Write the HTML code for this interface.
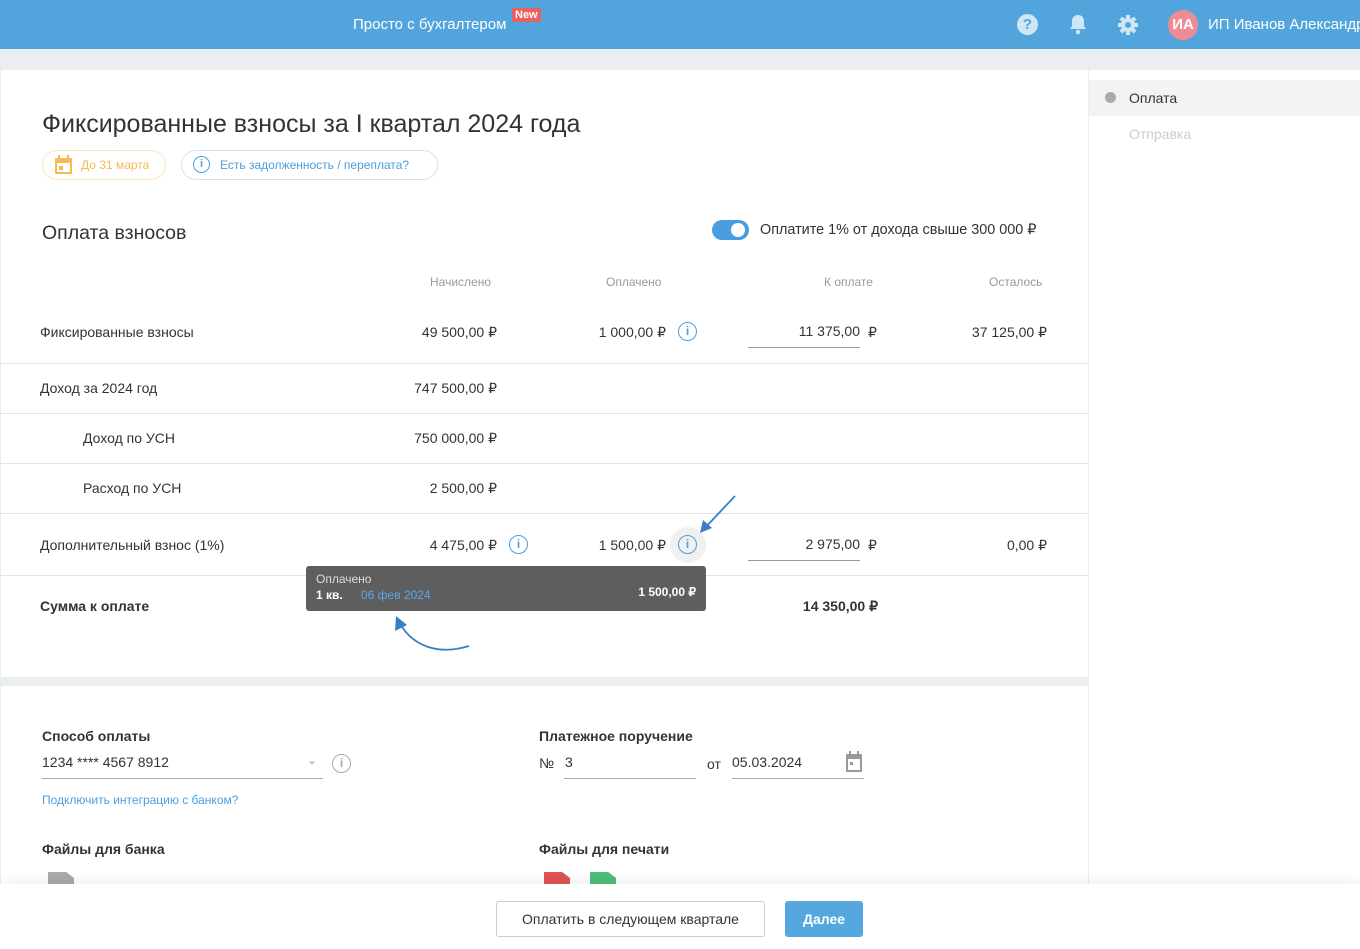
<!DOCTYPE html>
<html><head><meta charset="utf-8"><style>
*{box-sizing:border-box;margin:0;padding:0}
body{width:1360px;height:949px;overflow:hidden;background:#ebeef1;font-family:"Liberation Sans",sans-serif;color:#333;position:relative}
.a{position:absolute;white-space:nowrap}
.hdr{position:absolute;left:0;top:0;width:1360px;height:49px;background:#52a5dc}
.main{position:absolute;left:1px;top:70px;width:1087px;height:607px;background:#fff}
.main2{position:absolute;left:1px;top:686px;width:1087px;height:263px;background:#fff}
.side{position:absolute;left:1089px;top:70px;width:271px;height:879px;background:#fff}
.hl{position:absolute;left:1px;width:1087px;height:1px;background:#e4e4e4}
.t14{font-size:14px}
.r{text-align:right}
.ul{position:absolute;height:1px;background:#999}
.info{position:absolute;width:19px;height:19px;border:1.6px solid #4a9ee0;border-radius:50%;color:#4a9ee0;font-size:12px;font-weight:bold;text-align:center;line-height:16px;font-family:"Liberation Sans",sans-serif}
</style></head><body>
<div class="hdr"></div>
<div class="a" style="left:353px;top:16px;color:#fff;font-size:15px">Просто с бухгалтером</div>
<div class="a" style="left:512px;top:8px;background:#e8605f;color:#fff;font-size:11px;font-weight:bold;padding:1px 3px;border-radius:2px">New</div>
<div class="a" style="left:1017px;top:14px;width:21px;height:21px;border-radius:50%;background:#cfe6f7;color:#52a5dc;font-weight:bold;font-size:15px;text-align:center;line-height:21px">?</div>
<svg class="a" style="left:1068px;top:13px" width="20" height="22" viewBox="0 0 20 22"><path d="M10 2c-4 0-6 3-6 6v5l-2 3h16l-2-3V8c0-3-2-6-6-6z" fill="#cfe6f7"/><circle cx="10" cy="19" r="2.3" fill="#cfe6f7"/></svg>
<svg class="a" style="left:1117px;top:14px" width="22" height="22" viewBox="0 0 22 22"><g fill="#cfe6f7"><circle cx="11" cy="11" r="7"/><rect x="9" y="1" width="4" height="20"/><rect x="1" y="9" width="20" height="4"/><rect x="9" y="1" width="4" height="20" transform="rotate(45 11 11)"/><rect x="9" y="1" width="4" height="20" transform="rotate(-45 11 11)"/></g><circle cx="11" cy="11" r="3" fill="#52a5dc"/></svg>
<div class="a" style="left:1168px;top:10px;width:30px;height:30px;border-radius:50%;background:#ef8c93;color:#fff;font-weight:bold;font-size:15px;text-align:center;line-height:30px">ИА</div>
<div class="a" style="left:1208px;top:16px;color:#fff;font-size:15px">ИП Иванов Александр</div>

<div class="main"></div><div class="main2"></div>
<div class="side"></div>
<div class="a" style="left:1089px;top:80px;width:271px;height:36px;background:#f3f3f3"></div>
<div class="a" style="left:1105px;top:92px;width:11px;height:11px;border-radius:50%;background:#aaa"></div>
<div class="a t14" style="left:1129px;top:90px;color:#333">Оплата</div>
<div class="a t14" style="left:1129px;top:126px;color:#ccc">Отправка</div>

<div class="a" style="left:42px;top:110px;font-size:25px;color:#333">Фиксированные взносы за I квартал 2024 года</div>
<div class="a" style="left:42px;top:150px;width:124px;height:30px;border:1px solid #fde3c4;border-radius:15px"></div>
<svg class="a" style="left:54px;top:155px" width="19" height="20" viewBox="0 0 19 20"><rect x="1" y="3" width="17" height="16" rx="1" fill="#f5b955"/><rect x="4" y="0" width="2" height="5" fill="#f5b955"/><rect x="13" y="0" width="2" height="5" fill="#f5b955"/><rect x="3" y="8" width="13" height="9" fill="#fff"/><rect x="5" y="11" width="4" height="4" fill="#f5b955"/></svg>
<div class="a" style="left:81px;top:158px;font-size:12px;color:#f5b955">До 31 марта</div>
<div class="a" style="left:181px;top:150px;width:257px;height:30px;border:1px solid #cfe4f5;border-radius:15px"></div>
<div class="info" style="left:193px;top:156px;width:17px;height:17px;font-size:11px;line-height:14px">i</div>
<div class="a" style="left:220px;top:158px;font-size:12px;color:#4a9ee0">Есть задолженность / переплата?</div>

<div class="a" style="left:42px;top:222px;font-size:19.5px;color:#333">Оплата взносов</div>
<div class="a" style="left:712px;top:220px;width:37px;height:20px;border-radius:10px;background:#4a9ee0"></div>
<div class="a" style="left:731px;top:223px;width:14px;height:14px;border-radius:50%;background:#fff"></div>
<div class="a" style="left:760px;top:222px;font-size:14.4px">Оплатите 1% от дохода свыше 300 000 ₽</div>

<div class="a" style="left:430px;top:275px;font-size:12px;color:#999">Начислено</div>
<div class="a" style="left:606px;top:275px;font-size:12px;color:#999">Оплачено</div>
<div class="a" style="left:824px;top:275px;font-size:12px;color:#999">К оплате</div>
<div class="a" style="left:989px;top:275px;font-size:12px;color:#999">Осталось</div>

<div class="a t14" style="left:40px;top:324px">Фиксированные взносы</div>
<div class="a t14 r" style="right:863px;top:324px">49 500,00 ₽</div>
<div class="a t14 r" style="right:694px;top:324px">1 000,00 ₽</div>
<div class="info" style="left:678px;top:322px">i</div>
<div class="a t14 r" style="right:500px;top:323px">11 375,00</div>
<div class="a t14" style="left:868px;top:324px">₽</div>
<div class="ul" style="left:748px;top:347px;width:112px"></div>
<div class="a t14 r" style="right:313px;top:324px">37 125,00 ₽</div>
<div class="hl" style="top:363px"></div>

<div class="a t14" style="left:40px;top:380px">Доход за 2024 год</div>
<div class="a t14 r" style="right:863px;top:380px">747 500,00 ₽</div>
<div class="hl" style="top:413px"></div>
<div class="a t14" style="left:83px;top:430px">Доход по УСН</div>
<div class="a t14 r" style="right:863px;top:430px">750 000,00 ₽</div>
<div class="hl" style="top:463px"></div>
<div class="a t14" style="left:83px;top:480px">Расход по УСН</div>
<div class="a t14 r" style="right:863px;top:480px">2 500,00 ₽</div>
<div class="hl" style="top:513px"></div>

<div class="a t14" style="left:40px;top:537px">Дополнительный взнос (1%)</div>
<div class="a t14 r" style="right:863px;top:537px">4 475,00 ₽</div>
<div class="info" style="left:509px;top:535px">i</div>
<div class="a t14 r" style="right:694px;top:537px">1 500,00 ₽</div>
<div class="a" style="left:670px;top:527px;width:36px;height:36px;border-radius:50%;background:#f0f0f0"></div>
<div class="info" style="left:678px;top:535px">i</div>
<div class="a t14 r" style="right:500px;top:536px">2 975,00</div>
<div class="a t14" style="left:868px;top:537px">₽</div>
<div class="ul" style="left:748px;top:560px;width:112px"></div>
<div class="a t14 r" style="right:313px;top:537px">0,00 ₽</div>
<div class="hl" style="top:575px"></div>

<div class="a t14" style="left:40px;top:598px;font-weight:bold">Сумма к оплате</div>
<div class="a t14 r" style="right:482px;top:598px;font-weight:bold">14 350,00 ₽</div>

<div class="a" style="left:306px;top:566px;width:400px;height:45px;background:#5e5e5e;border-radius:3px"></div>
<div class="a" style="left:316px;top:572px;font-size:12px;color:#ddd">Оплачено</div>
<div class="a" style="left:316px;top:588px;font-size:12px;color:#fff;font-weight:bold">1 кв.</div>
<div class="a" style="left:361px;top:588px;font-size:12px;color:#5aa8ea">06 фев 2024</div>
<div class="a r" style="right:664px;top:585px;font-size:12px;color:#fff;font-weight:bold">1 500,00 ₽</div>

<svg class="a" style="left:0;top:0" width="1360" height="949" viewBox="0 0 1360 949"><g stroke="#3a7ec6" stroke-width="1.8" fill="none"><path d="M735 496 L703 530"/><path d="M469 646 C440 655 412 648 398 620"/></g><path d="M700 533 L703 520 L712 528Z" fill="#3a7ec6"/><path d="M396 616 L395 631 L407 625Z" fill="#3a7ec6"/></svg>

<div class="a t14" style="left:42px;top:728px;font-weight:bold">Способ оплаты</div>
<div class="a t14" style="left:42px;top:754px">1234 **** 4567 8912</div>
<div class="a" style="left:307px;top:753px;font-size:12px;color:#999">⌄</div>
<div class="ul" style="left:42px;top:778px;width:281px;background:#aaa"></div>
<div class="a" style="left:332px;top:754px;width:19px;height:19px;border:1.5px solid #aaa;border-radius:50%;color:#aaa;font-size:12px;font-weight:bold;text-align:center;line-height:16px">i</div>
<div class="a" style="left:42px;top:793px;font-size:12px;color:#4a9ee0">Подключить интеграцию с банком?</div>
<div class="a t14" style="left:539px;top:728px;font-weight:bold">Платежное поручение</div>
<div class="a t14" style="left:539px;top:755px">№</div>
<div class="a t14" style="left:565px;top:754px">3</div>
<div class="ul" style="left:564px;top:778px;width:132px;background:#aaa"></div>
<div class="a t14" style="left:707px;top:756px">от</div>
<div class="a t14" style="left:732px;top:754px">05.03.2024</div>
<div class="ul" style="left:732px;top:778px;width:132px;background:#aaa"></div>
<svg class="a" style="left:845px;top:751px" width="18" height="22" viewBox="0 0 18 22"><rect x="1" y="3" width="16" height="18" rx="1" fill="#999"/><rect x="4" y="0" width="2" height="5" fill="#999"/><rect x="12" y="0" width="2" height="5" fill="#999"/><rect x="3" y="8" width="12" height="11" fill="#fff"/><rect x="5" y="11" width="3" height="3" fill="#999"/></svg>

<div class="a t14" style="left:42px;top:841px;font-weight:bold">Файлы для банка</div>
<div class="a t14" style="left:539px;top:841px;font-weight:bold">Файлы для печати</div>
<div class="a" style="left:48px;top:872px;width:26px;height:20px;background:#aaa;clip-path:polygon(0 0,70% 0,100% 30%,100% 100%,0 100%)"></div>
<div class="a" style="left:544px;top:872px;width:26px;height:20px;background:#e05353;clip-path:polygon(0 0,70% 0,100% 30%,100% 100%,0 100%)"></div>
<div class="a" style="left:590px;top:872px;width:26px;height:20px;background:#4cbf7a;clip-path:polygon(0 0,70% 0,100% 30%,100% 100%,0 100%)"></div>

<div class="a" style="left:0;top:884px;width:1360px;height:65px;background:#fff;box-shadow:0 -4px 10px rgba(0,0,0,0.06)"></div>
<div class="a" style="left:496px;top:901px;width:269px;height:36px;border:1px solid #ccc;border-radius:3px;background:#fff;font-size:14px;text-align:center;line-height:34px;color:#333">Оплатить в следующем квартале</div>
<div class="a" style="left:785px;top:901px;width:78px;height:36px;border-radius:3px;background:#55a7df;font-size:14px;text-align:center;line-height:36px;color:#fff;font-weight:bold">Далее</div>
</body></html>
